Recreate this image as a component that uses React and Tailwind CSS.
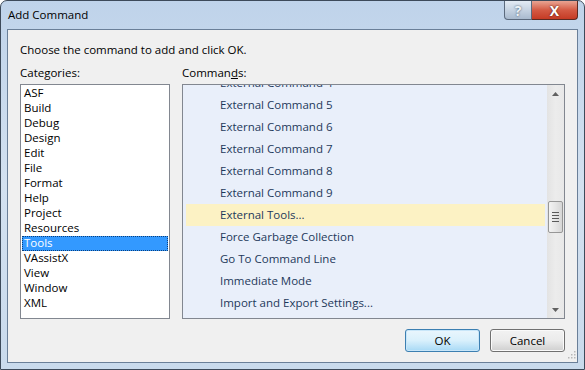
import React from "react";

const categories = [
  "ASF", "Build", "Debug", "Design", "Edit", "File", "Format", "Help",
  "Project", "Resources", "Tools", "VAssistX", "View", "Window", "XML",
];

const commands = [
  "External Command 4",
  "External Command 5",
  "External Command 6",
  "External Command 7",
  "External Command 8",
  "External Command 9",
  "External Tools...",
  "Force Garbage Collection",
  "Go To Command Line",
  "Immediate Mode",
  "Import and Export Settings...",
];

const font = { fontFamily: '"Segoe UI", "Open Sans", "Noto Sans", sans-serif' };

export default function App() {
  return (
    <div
      className="w-[585px] h-[370px] flex flex-col bg-gradient-to-b from-[#bfd3ea] via-[#d3e1f0] to-[#c9daec] border border-[#3d4a5a] rounded-t-[7px] overflow-hidden text-[11px] text-black"
      style={font}
    >
      {/* Title bar */}
      <div className="h-[28px] flex items-start shrink-0">
        <div className="pl-[7px] pt-[6px] text-[11.5px] leading-[15px] text-black">Add Command</div>
        <div className="ml-auto mr-[6px] flex">
          <div className="w-[28px] h-[19px] border border-t-0 border-[#5b6a7d] rounded-bl-[4px] bg-gradient-to-b from-[#e3ebf4] via-[#c6d3e2] to-[#a9bace] flex items-center justify-center text-[14px] font-bold text-[#eef3f8] [text-shadow:0_0_2px_#33475e]">
            ?
          </div>
          <div className="w-[46px] h-[19px] border border-t-0 border-l-0 border-[#5b2a22] rounded-br-[4px] bg-gradient-to-b from-[#e8a493] via-[#d45a44] to-[#c53a24] flex items-center justify-center text-[14px] font-bold text-white [text-shadow:0_0_2px_#3a0f08]">
            X
          </div>
        </div>
      </div>

      {/* Client area */}
      <div className="flex-1 mx-[6px] mb-[6px] border border-[#6a7f98] bg-[#f0f0f0] flex flex-col pl-[12px] pr-[12px] pt-[12px] pb-[10px] relative">
        <div className="leading-[15px] text-[11.5px]">Choose the command to add and click OK.</div>

        <div className="flex gap-[12px] mt-[8px]">
          {/* Categories */}
          <div className="w-[150px] flex flex-col">
            <div className="leading-[15px] text-[11.5px]">
              Cate<span className="underline">g</span>ories:
            </div>
            <div className="mt-[4px] h-[235px] border border-[#828790] bg-white p-[1px] flex flex-col">
              {categories.map((c) => (
                <div
                  key={c}
                  className={
                    c === "Tools"
                      ? "h-[15px] leading-[14px] px-[2px] text-[11.5px] bg-[#3399ff] text-white outline outline-1 outline-dotted outline-[#0c3f7a] -outline-offset-1"
                      : "h-[15px] leading-[14px] px-[2px] text-[11.5px]"
                  }
                >
                  {c}
                </div>
              ))}
            </div>
          </div>

          {/* Commands */}
          <div className="flex-1 flex flex-col">
            <div className="leading-[15px] text-[11.5px]">
              Comman<span className="underline">d</span>s:
            </div>
            <div className="mt-[4px] h-[235px] border border-[#828790] bg-[#e9effa] flex">
              <div className="flex-1 overflow-hidden">
                <div className="mt-[-13px] flex flex-col">
                  {commands.map((c) => (
                    <div
                      key={c}
                      className={
                        c === "External Tools..."
                          ? "h-[22px] leading-[22px] ml-[3px] mr-[2px] pl-[34px] text-[11.5px] bg-[#fcf2c4] text-[#1e395b]"
                          : "h-[22px] leading-[22px] ml-[3px] mr-[2px] pl-[34px] text-[11.5px] text-[#1e395b]"
                      }
                    >
                      {c}
                    </div>
                  ))}
                </div>
              </div>
              <Scrollbar />
            </div>
          </div>
        </div>

        {/* Buttons */}
        <div className="flex justify-end gap-[10px] mt-[10px]">
          <button className="w-[75px] h-[23px] rounded-[3px] border border-[#3c7fb1] bg-gradient-to-b from-[#eaf6fd] via-[#d9f0fc] to-[#a7d9f5] shadow-[inset_0_0_0_1px_#c8e6f9] text-[11.5px] text-black">
            OK
          </button>
          <button className="w-[75px] h-[23px] rounded-[3px] border border-[#707070] bg-gradient-to-b from-[#f2f2f2] via-[#ebebeb] to-[#cfcfcf] shadow-[inset_0_0_0_1px_#fafafa] text-[11.5px] text-black">
            Cancel
          </button>
        </div>

        {/* size grip */}
        <svg className="absolute right-[1px] bottom-[1px]" width="11" height="11" viewBox="0 0 11 11">
          {[[9, 1], [9, 4], [6, 4], [9, 7], [6, 7], [3, 7]].map(([x, y], i) => (
            <rect key={i} x={x} y={y} width="1.5" height="1.5" fill="#b8b8b8" />
          ))}
        </svg>
      </div>
    </div>
  );
}

function Scrollbar() {
  return (
    <div className="w-[17px] bg-gradient-to-r from-[#e3e3e3] via-[#ececec] to-[#e8e8e8] flex flex-col items-center">
      <div className="h-[17px] w-full flex items-center justify-center">
        <svg width="7" height="4" viewBox="0 0 7 4">
          <path d="M0 4 L3.5 0 L7 4 Z" fill="#606060" />
        </svg>
      </div>
      <div className="h-[99px]" />
      <div className="w-[15px] h-[32px] rounded-[2px] border border-[#979797] bg-gradient-to-r from-[#f3f3f3] via-[#e6e6e6] to-[#d6d6d6] flex flex-col items-center justify-center gap-[2px]">
        <div className="w-[7px] h-[1px] bg-[#5a5a5a]" />
        <div className="w-[7px] h-[1px] bg-[#5a5a5a]" />
        <div className="w-[7px] h-[1px] bg-[#5a5a5a]" />
        <div className="w-[7px] h-[1px] bg-[#5a5a5a]" />
      </div>
      <div className="flex-1" />
      <div className="h-[17px] w-full flex items-center justify-center">
        <svg width="7" height="4" viewBox="0 0 7 4">
          <path d="M0 0 L3.5 4 L7 0 Z" fill="#606060" />
        </svg>
      </div>
    </div>
  );
}
